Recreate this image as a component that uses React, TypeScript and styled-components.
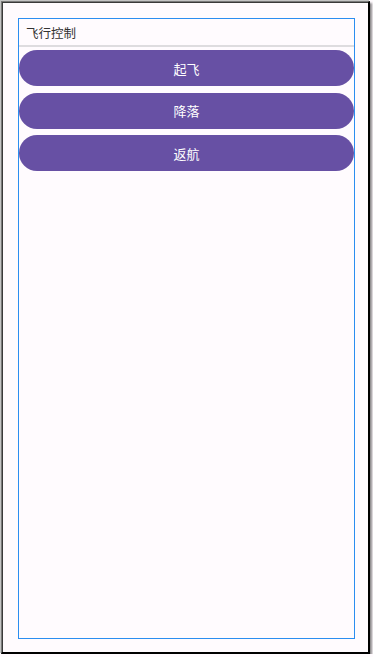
import React from "react";
import styled, { createGlobalStyle } from "styled-components";

const Global = createGlobalStyle`
  html, body { margin: 0; padding: 0; background: #fffbfe; }
  body { font-family: "Noto Sans CJK SC", "Noto Sans", sans-serif; }
  * { box-sizing: border-box; }
`;

const Frame = styled.div`
  margin: 1px 0 0 1px;
  width: 369px;
  height: 653px;
  background: #fffbfe;
  border-top: 1px solid #7a7a7a;
  border-left: 1px solid #7a7a7a;
  border-right: 2px solid #000;
  border-bottom: 2px solid #000;
  box-shadow: inset 1px 1px 0 #3a3a3a, -1px -1px 0 #c4c4c4, 2px 2px 2px rgba(0, 0, 0, 0.45);
  padding: 16px 13px 13px 16px;
  display: flex;
`;

const Panel = styled.div`
  flex: 1;
  border: 1px solid #2b8ef0;
  display: flex;
  flex-direction: column;
`;

const Header = styled.div`
  height: 28px;
  display: flex;
  align-items: center;
  padding-left: 7px;
  border-bottom: 2px solid #dedcdf;
  font-size: 12.5px;
  color: #333;
`;

const Actions = styled.div`
  display: flex;
  flex-direction: column;
  gap: 6.5px;
  padding-top: 3px;
`;

const ActionButton = styled.button`
  height: 36px;
  width: 100%;
  border: none;
  border-radius: 18px;
  background: #6750a4;
  color: #fff;
  font-family: "Noto Sans CJK SC", "Noto Sans", sans-serif;
  font-size: 13px;
  padding: 0;
  cursor: pointer;
`;

const actions = ["起飞", "降落", "返航"];

export default function App() {
  return (
    <>
      <Global />
      <Frame>
        <Panel>
          <Header>飞行控制</Header>
          <Actions>
            {actions.map((a) => (
              <ActionButton key={a}>{a}</ActionButton>
            ))}
          </Actions>
        </Panel>
      </Frame>
    </>
  );
}
